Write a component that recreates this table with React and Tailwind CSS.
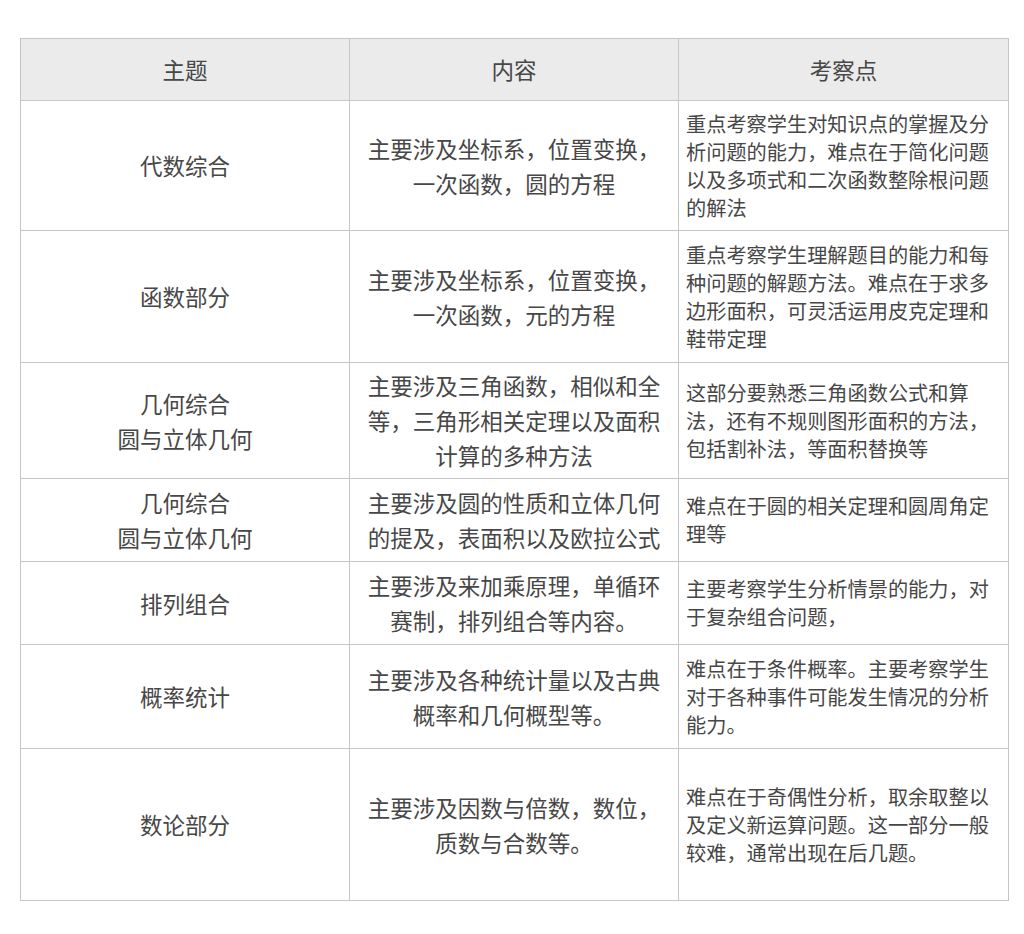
const ROWS = [
  {
    h: 'h-[130px]',
    topic: ['代数综合'],
    content: ['主要涉及坐标系，位置变换，', '一次函数，圆的方程'],
    points: ['重点考察学生对知识点的掌握及分', '析问题的能力，难点在于简化问题', '以及多项式和二次函数整除根问题', '的解法'],
  },
  {
    h: 'h-[132px]',
    topic: ['函数部分'],
    content: ['主要涉及坐标系，位置变换，', '一次函数，元的方程'],
    points: ['重点考察学生理解题目的能力和每', '种问题的解题方法。难点在于求多', '边形面积，可灵活运用皮克定理和', '鞋带定理'],
  },
  {
    h: 'h-[116px]',
    topic: ['几何综合', '圆与立体几何'],
    content: ['主要涉及三角函数，相似和全', '等，三角形相关定理以及面积', '计算的多种方法'],
    points: ['这部分要熟悉三角函数公式和算', '法，还有不规则图形面积的方法，', '包括割补法，等面积替换等'],
  },
  {
    h: 'h-[83px]',
    topic: ['几何综合', '圆与立体几何'],
    content: ['主要涉及圆的性质和立体几何', '的提及，表面积以及欧拉公式'],
    points: ['难点在于圆的相关定理和圆周角定', '理等'],
  },
  {
    h: 'h-[83px]',
    topic: ['排列组合'],
    content: ['主要涉及来加乘原理，单循环', '赛制，排列组合等内容。'],
    points: ['主要考察学生分析情景的能力，对', '于复杂组合问题，'],
  },
  {
    h: 'h-[104px]',
    topic: ['概率统计'],
    content: ['主要涉及各种统计量以及古典', '概率和几何概型等。'],
    points: ['难点在于条件概率。主要考察学生', '对于各种事件可能发生情况的分析', '能力。'],
  },
  {
    h: 'h-[152px]',
    topic: ['数论部分'],
    content: ['主要涉及因数与倍数，数位，', '质数与合数等。'],
    points: ['难点在于奇偶性分析，取余取整以', '及定义新运算问题。这一部分一般', '较难，通常出现在后几题。'],
  },
]

function Lines({ lines }) {
  return lines.map((l, i) => (
    <span key={i} className="block whitespace-nowrap">
      {l}
    </span>
  ))
}

export default function App() {
  return (
    <div
      className="min-h-[934px] w-[1024px] bg-white pt-[38px] pl-[20px] text-[#474747]"
      style={{ fontFamily: '"Noto Sans CJK SC", "Noto Sans", sans-serif' }}
    >
      <table className="w-[988px] table-fixed border-collapse border border-[#c6c6c6]">
        <colgroup>
          <col className="w-[329px]" />
          <col className="w-[329px]" />
          <col className="w-[330px]" />
        </colgroup>
        <thead>
          <tr className="h-[62px] bg-[#ebebeb]">
            <th className="border border-[#c6c6c6] text-center text-[22.5px] font-normal">主题</th>
            <th className="border border-[#c6c6c6] text-center text-[22.5px] font-normal">内容</th>
            <th className="border border-[#c6c6c6] text-center text-[22.5px] font-normal">考察点</th>
          </tr>
        </thead>
        <tbody>
          {ROWS.map((r, i) => (
            <tr key={i} className={r.h}>
              <td className="border border-[#c6c6c6] text-center align-middle text-[22.5px] leading-[35px]">
                <Lines lines={r.topic} />
              </td>
              <td className="border border-[#c6c6c6] px-2 text-center align-middle text-[22.5px] leading-[35px]">
                <Lines lines={r.content} />
              </td>
              <td className="border border-[#c6c6c6] pl-[7px] pr-1 text-left align-middle text-[20.2px] leading-[28px]">
                <Lines lines={r.points} />
              </td>
            </tr>
          ))}
        </tbody>
      </table>
    </div>
  )
}
